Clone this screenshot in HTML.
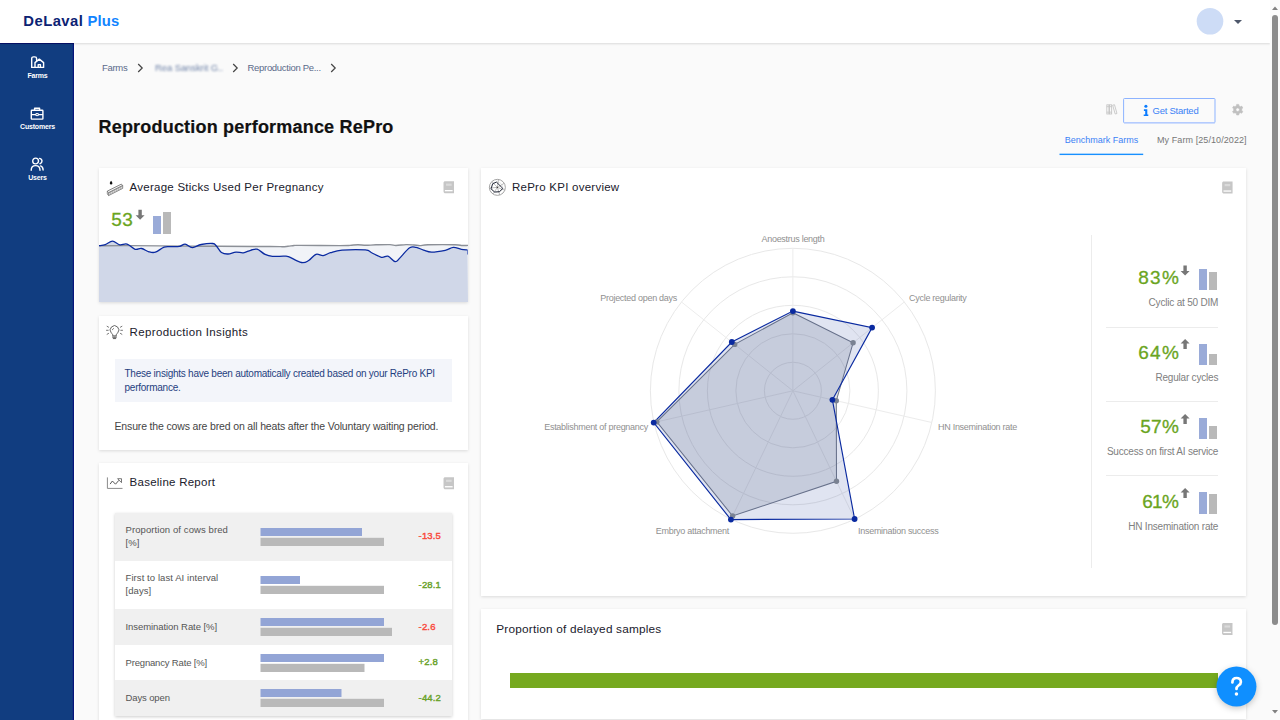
<!DOCTYPE html>
<html><head><meta charset="utf-8"><title>DeLaval Plus</title>
<style>
*{box-sizing:border-box;margin:0;padding:0}
html,body{width:1280px;height:720px;overflow:hidden;background:#fafafa;font-family:"Liberation Sans",sans-serif;color:#222}
#hdr{position:absolute;left:0;top:0;width:1270px;height:43px;background:#fff;box-shadow:0 1px 2px rgba(0,0,0,.13);z-index:5}
.logo{position:absolute;left:23.300px;top:12.400px;font-weight:bold;font-size:14.800px;line-height:18px;color:#0c2273;white-space:nowrap;letter-spacing:.2px}
#caret{position:absolute;left:1234px;top:20px;width:0;height:0;border-left:4px solid transparent;border-right:4px solid transparent;border-top:4px solid #4f586b}
#side{position:absolute;left:0;top:43px;width:74.400px;height:677px;background:#113d80;box-shadow:inset 0 1px 0 #06126e,inset -1.200px 0 0 #06157a,1.500px 0 0 #fdfdfd;z-index:4}
.nav{position:absolute;left:.5px;margin-top:0;width:74px;text-align:center;color:#fff;font-weight:bold;font-size:7px;line-height:8px;letter-spacing:-.2px}
.card{position:absolute;background:#fff;box-shadow:0 1px 3px rgba(0,0,0,.13)}
.ct{position:absolute;font-size:11.500px;line-height:14px;letter-spacing:.25px;color:#20202c;white-space:nowrap}
#sb{position:absolute;left:1270px;top:0;width:10px;height:720px;background:#fafafa;z-index:9}
#sb .th{position:absolute;left:2px;top:15px;width:6px;height:610px;border-radius:3px;background:#8b8b8b}
.t{position:absolute;white-space:nowrap}
svg{position:absolute;overflow:visible}
.bc{position:absolute;top:61.500px;font-size:9.500px;line-height:12px;color:#5a6a8a;white-space:nowrap;letter-spacing:-.3px}
.big{position:absolute;font-size:19px;line-height:22px;color:#6aa51e;white-space:nowrap;letter-spacing:.6px;-webkit-text-stroke:.3px #6aa51e}
.kl{position:absolute;font-size:10px;line-height:12px;color:#808080;white-space:nowrap;text-align:right;right:-.2px;letter-spacing:-.2px}
.rl{position:absolute;font-size:9px;line-height:11px;color:#909090;white-space:nowrap;letter-spacing:-.28px}
.row{position:absolute;left:16px;width:337px}
.rt{position:absolute;left:26.500px;font-size:9.500px;line-height:13.300px;color:#555;white-space:nowrap}
.rv{position:absolute;left:319.600px;font-size:9.500px;line-height:12px;font-weight:normal;white-space:nowrap;-webkit-text-stroke:.4px currentColor;letter-spacing:.15px}
.bb{position:absolute;left:146px;height:8px;background:#93a5d6}
.bg{position:absolute;left:146px;height:8px;background:#b9b9b9}
</style></head><body>
<div id="hdr"><div class="logo" style="letter-spacing:.47px">DeLaval</div><div class="logo" style="left:87.400px;color:#1284ff">Plus</div><svg style="left:1190px;top:0" width="40" height="43"><circle cx="20" cy="21.250" r="13.300" fill="#cddcf6"/></svg><div id="caret"></div></div>
<div id="side">
<svg style="left:30px;top:13px" width="15" height="13" viewBox="0 0 15 13" fill="none" stroke="#fff" stroke-width="1.4" stroke-linejoin="round" stroke-linecap="round"><path d="M1.7 11.4V2.6c0-1 .8-1.7 1.8-1.7h1.3c1 0 1.8.7 1.8 1.7v2"/><path d="M5 11.4V6.6l4.3-3.5 4.3 3.5v4.8H1.7"/><path d="M8.2 11.2V8.6h2.2v2.6"/></svg>
<div class="nav" style="top:29px">Farms</div>
<svg style="left:30px;top:64px" width="14" height="13" viewBox="0 0 14 13" fill="none" stroke="#fff" stroke-width="1.4" stroke-linejoin="round"><rect x="1.3" y="3.3" width="11.6" height="8.8" rx=".6"/><path d="M4.6 3.2V1.2h5v2"/><path d="M1.3 7.6h4.6M8.3 7.6h4.6"/><path d="M5.9 6.6h2.4v2h-2.4z" stroke-width="1"/></svg>
<div class="nav" style="top:80px">Customers</div>
<svg style="left:30px;top:114px" width="14" height="14" viewBox="0 0 14 14" fill="none" stroke="#fff" stroke-width="1.4" stroke-linecap="round"><circle cx="5.6" cy="4" r="2.9"/><path d="M1.2 13.2c0-2.9 1.9-4.6 4.4-4.6s4.4 1.7 4.4 4.6"/><path d="M9.6 1.4c1.5.3 2.4 1.3 2.4 2.7 0 1.300-.8 2.300-2 2.600"/><path d="M10.600 8.900c1.500.5 2.500 1.900 2.500 4.200"/></svg>
<div class="nav" style="top:131px">Users</div>
</div>
<div id="sb"><svg style="left:2px;top:6px" width="6" height="4"><path d="M0 4L3 0.500L6 4z" fill="#808080"/></svg><div class="th"></div><svg style="left:2px;top:710px" width="6" height="4"><path d="M0 0L3 3.500L6 0z" fill="#808080"/></svg></div>
<div class="bc" style="left:102px">Farms</div><svg style="left:137px;top:63px" width="7" height="10" viewBox="0 0 7 10" fill="none" stroke="#444" stroke-width="1.2"><path d="M1.2 1l4 4-4 4"/></svg>
<div class="bc" style="left:155px;color:#6f83a8;filter:blur(1.3px);letter-spacing:-.1px">Rea Sanskrit G..</div><svg style="left:232px;top:63px" width="7" height="10" viewBox="0 0 7 10" fill="none" stroke="#444" stroke-width="1.2"><path d="M1.2 1l4 4-4 4"/></svg>
<div class="bc" style="left:247.500px">Reproduction Pe...</div><svg style="left:329.5px;top:63px" width="7" height="10" viewBox="0 0 7 10" fill="none" stroke="#444" stroke-width="1.2"><path d="M1.2 1l4 4-4 4"/></svg>
<div class="t" style="left:98.500px;top:116px;font-size:18px;line-height:22px;font-weight:bold;color:#111;letter-spacing:.2px;-webkit-text-stroke:.2px #111">Reproduction performance RePro</div>
<svg style="left:1105.500px;top:103.600px" width="11.900" height="11" viewBox="0 0 13 12" fill="none" stroke="#c2c2c2" stroke-width=".9"><rect x=".9" y=".9" width="2.300" height="10"/><rect x="3.900" y=".9" width="2.300" height="10"/><path d="M.9 2.900h2.300M.9 8.900h2.300M3.900 2.900h2.300M3.900 8.900h2.300"/><path d="M7.300 1.300l2-.5 2.700 9.600-2 .5z"/></svg>
<svg style="left:1123px;top:98px" width="94" height="27"><rect x=".6" y=".5" width="91.400" height="24.300" rx=".8" fill="none" stroke="#8db3ff" stroke-width="1"/><path d="M1 25.200h91" stroke="#c5d8ff" stroke-width=".8"/></svg>
<svg style="left:1143px;top:104px" width="6" height="13" viewBox="0 0 6 13" fill="#0a7cff"><circle cx="2.900" cy="2.250" r="1.550"/><path d="M.9 5.200h3.400v5.200h1v1.700H.7v-1.700h1.500V6.900H.9z"/></svg>
<div class="t" style="left:1152.500px;top:105px;font-size:9.500px;line-height:12px;color:#3b82f6;letter-spacing:-.24px">Get Started</div>
<svg style="left:1231.700px;top:103.500px" width="11.400" height="11.400" viewBox="0 0 12 12"><path fill-rule="evenodd" d="M4.65 1.92L4.87 0.41L7.13 0.41L7.35 1.92L8.86 2.79L10.27 2.23L11.40 4.19L10.21 5.13L10.21 6.87L11.40 7.81L10.27 9.77L8.86 9.21L7.35 10.08L7.13 11.59L4.87 11.59L4.65 10.08L3.14 9.21L1.73 9.77L0.60 7.81L1.79 6.87L1.79 5.13L0.60 4.19L1.73 2.23L3.14 2.79ZM7.90 6.00A1.9 1.9 0 1 0 4.10 6.00A1.9 1.9 0 1 0 7.90 6.00Z" fill="#c0c0c0" stroke="#c0c0c0" stroke-width=".6" stroke-linejoin="round"/></svg>
<div class="t" style="left:1064.800px;top:133.500px;font-size:9px;line-height:12px;color:#3b82f6;letter-spacing:0px">Benchmark Farms</div>
<svg style="left:1059px;top:153px" width="86" height="3"><rect x=".5" y=".65" width="83.700" height="1.400" fill="#1890ff"/></svg>
<div class="t" style="left:1157px;top:133.500px;font-size:9px;line-height:12px;color:#777;letter-spacing:.08px">My Farm [25/10/2022]</div>
<div class="card" style="left:99px;top:168px;width:369px;height:134px;overflow:hidden">
<svg style="left:0;top:0" width="30" height="30" viewBox="0 0 30 30" fill="none"><path d="M12.100 12.800c.9 1.200 1.300 1.900 1.300 2.500a1.300 1.300 0 0 1-2.600 0c0-.6.400-1.300 1.300-2.500z" fill="#111"/><path d="M8.300 23.100L22.400 16.100l1.300 1.500L9.600 24.800z" fill="#f4f4f4" stroke="#555" stroke-width=".7" stroke-linejoin="round"/><path d="M9.600 24.800L23.700 17.600v2.800L9.600 27.600z" fill="#ddd" stroke="#666" stroke-width=".7" stroke-linejoin="round"/><path d="M8.300 23.100v2.900l1.300 1.600" stroke="#666" stroke-width=".7"/><path d="M11.600 23.900v2.600M13.600 22.900v2.600M15.600 21.900v2.600M17.600 20.900v2.600M19.600 19.900v2.600M21.600 18.900v2.600" stroke="#999" stroke-width=".6"/></svg>
<div class="ct" style="left:30.600px;top:11.500px">Average Sticks Used Per Pregnancy</div>
<svg style="left:344px;top:12px" width="14" height="15" viewBox="0 0 14 15"><g transform="translate(0.00 0.70) scale(1.045 1)"><path d="M2 .5h8.500v12H2.300C1.300 12.500.5 11.700.5 10.700V2C.5 1.200 1.200.5 2 .5z" fill="#c6c6c6"/><rect x="2.900" y="2.900" width="5.400" height="2.200" fill="#dadada"/><rect x="1.800" y="9.300" width="7.400" height="1.300" fill="#fff"/></g></svg>
<div class="big" style="left:12.200px;top:41.300px">53</div>
<svg style="left:36px;top:41px" width="11" height="12" viewBox="0 0 11 12"><path transform="translate(0.60 0.80)" d="M4.500 10L9 5.400H6.200V0H2.800V5.400H0z" fill="#777"/></svg>
<div style="position:absolute;left:54px;top:48px;width:8px;height:18px;background:#9aabd8"></div>
<div style="position:absolute;left:64px;top:44px;width:8px;height:22px;background:#b9b9b9"></div>
<svg style="left:0;top:0" width="369" height="134" viewBox="0 0 369 134">
<path d="M0.0 77.8C5.6 77.8 12.8 77.5 31.0 77.6C49.2 77.7 75.8 78.0 101.0 78.2C126.2 78.4 156.2 78.4 171.0 78.5C185.8 78.6 179.8 78.7 183.0 78.7C186.2 78.7 186.8 78.5 189.0 78.3C191.2 78.1 192.8 77.7 195.0 77.5C197.2 77.3 192.7 77.4 201.0 77.4C209.3 77.4 232.0 77.6 241.0 77.6C250.0 77.6 247.8 77.6 251.0 77.4C254.2 77.2 256.1 76.7 259.0 76.7C261.9 76.7 263.8 77.3 267.0 77.3C270.2 77.3 272.7 76.9 277.0 76.8C281.3 76.7 287.4 76.5 291.0 76.6C294.6 76.7 294.1 77.5 297.0 77.5C299.9 77.5 303.8 76.7 307.0 76.6C310.2 76.5 312.5 76.8 315.0 77.0C317.5 77.2 318.5 77.6 321.0 77.6C323.5 77.6 322.7 77.0 329.0 76.8C335.3 76.6 349.9 76.6 356.0 76.7C362.1 76.8 360.7 77.4 363.0 77.5C365.3 77.6 367.9 77.4 369.0 77.4L369 134L0 134Z" fill="#f1f3f7"/>
<path d="M0.0 77.7C1.1 77.5 3.9 77.4 6.3 76.6C8.7 75.8 10.9 73.2 13.5 73.2C16.1 73.2 18.2 76.3 20.8 76.8C23.4 77.3 25.3 75.3 28.1 76.1C30.9 76.9 33.5 80.5 36.1 81.3C38.7 82.1 40.1 80.0 42.6 80.5C45.1 81.0 47.4 83.1 49.9 83.8C52.4 84.5 53.7 85.0 56.4 84.2C59.1 83.4 62.3 80.1 65.1 79.1C67.9 78.1 68.9 78.7 71.7 78.6C74.5 78.5 77.8 78.8 80.4 78.3C83.0 77.9 83.9 75.9 86.2 76.1C88.5 76.3 90.5 79.5 93.4 79.6C96.3 79.7 98.5 77.2 102.2 76.5C105.9 75.8 111.1 75.2 113.8 75.5C116.5 75.8 115.8 76.4 117.4 78.0C119.0 79.6 120.4 83.1 122.5 84.5C124.6 85.9 126.4 86.1 129.0 86.0C131.6 85.9 134.2 84.3 137.0 84.1C139.8 83.9 141.7 85.1 144.3 84.8C146.9 84.5 149.1 82.9 151.6 82.3C154.1 81.7 155.5 80.5 158.1 81.2C160.7 81.9 163.3 85.1 166.1 86.4C168.9 87.7 170.0 88.0 173.4 88.3C176.8 88.6 182.1 88.1 185.0 88.2C187.9 88.3 186.3 87.5 189.4 88.6C192.5 89.7 198.7 93.8 202.4 94.5C206.1 95.2 207.1 94.0 209.7 92.5C212.3 91.0 214.4 87.2 217.0 86.3C219.6 85.4 221.6 87.9 224.2 87.6C226.8 87.3 228.1 85.7 231.5 84.7C234.9 83.7 236.8 82.6 243.1 82.1C249.4 81.6 261.2 81.5 266.4 81.9C271.6 82.3 269.3 83.2 272.2 84.5C275.1 85.8 279.4 88.6 282.4 89.3C285.4 90.0 286.4 87.4 288.9 88.2C291.4 89.0 294.0 93.4 296.2 93.7C298.4 94.0 298.6 92.1 301.2 89.6C303.8 87.1 307.8 81.5 310.7 79.7C313.6 77.9 314.7 79.0 317.2 79.4C319.7 79.8 321.7 81.3 324.5 82.1C327.3 82.9 328.6 84.1 332.5 84.1C336.4 84.1 342.4 83.1 346.3 82.3C350.2 81.5 351.4 79.6 354.3 79.4C357.2 79.2 359.8 80.9 362.3 81.3C364.8 81.8 367.3 81.8 368.4 81.9L369 134L0 134Z" fill="#d0d7e8"/>
<path d="M0.0 77.8C5.6 77.8 12.8 77.5 31.0 77.6C49.2 77.7 75.8 78.0 101.0 78.2C126.2 78.4 156.2 78.4 171.0 78.5C185.8 78.6 179.8 78.7 183.0 78.7C186.2 78.7 186.8 78.5 189.0 78.3C191.2 78.1 192.8 77.7 195.0 77.5C197.2 77.3 192.7 77.4 201.0 77.4C209.3 77.4 232.0 77.6 241.0 77.6C250.0 77.6 247.8 77.6 251.0 77.4C254.2 77.2 256.1 76.7 259.0 76.7C261.9 76.7 263.8 77.3 267.0 77.3C270.2 77.3 272.7 76.9 277.0 76.8C281.3 76.7 287.4 76.5 291.0 76.6C294.6 76.7 294.1 77.5 297.0 77.5C299.9 77.5 303.8 76.7 307.0 76.6C310.2 76.5 312.5 76.8 315.0 77.0C317.5 77.2 318.5 77.6 321.0 77.6C323.5 77.6 322.7 77.0 329.0 76.8C335.3 76.6 349.9 76.6 356.0 76.7C362.1 76.8 360.7 77.4 363.0 77.5C365.3 77.6 367.9 77.4 369.0 77.4" fill="none" stroke="#8c9097" stroke-width="1.4"/>
<path d="M0.0 77.7C1.1 77.5 3.9 77.4 6.3 76.6C8.7 75.8 10.9 73.2 13.5 73.2C16.1 73.2 18.2 76.3 20.8 76.8C23.4 77.3 25.3 75.3 28.1 76.1C30.9 76.9 33.5 80.5 36.1 81.3C38.7 82.1 40.1 80.0 42.6 80.5C45.1 81.0 47.4 83.1 49.9 83.8C52.4 84.5 53.7 85.0 56.4 84.2C59.1 83.4 62.3 80.1 65.1 79.1C67.9 78.1 68.9 78.7 71.7 78.6C74.5 78.5 77.8 78.8 80.4 78.3C83.0 77.9 83.9 75.9 86.2 76.1C88.5 76.3 90.5 79.5 93.4 79.6C96.3 79.7 98.5 77.2 102.2 76.5C105.9 75.8 111.1 75.2 113.8 75.5C116.5 75.8 115.8 76.4 117.4 78.0C119.0 79.6 120.4 83.1 122.5 84.5C124.6 85.9 126.4 86.1 129.0 86.0C131.6 85.9 134.2 84.3 137.0 84.1C139.8 83.9 141.7 85.1 144.3 84.8C146.9 84.5 149.1 82.9 151.6 82.3C154.1 81.7 155.5 80.5 158.1 81.2C160.7 81.9 163.3 85.1 166.1 86.4C168.9 87.7 170.0 88.0 173.4 88.3C176.8 88.6 182.1 88.1 185.0 88.2C187.9 88.3 186.3 87.5 189.4 88.6C192.5 89.7 198.7 93.8 202.4 94.5C206.1 95.2 207.1 94.0 209.7 92.5C212.3 91.0 214.4 87.2 217.0 86.3C219.6 85.4 221.6 87.9 224.2 87.6C226.8 87.3 228.1 85.7 231.5 84.7C234.9 83.7 236.8 82.6 243.1 82.1C249.4 81.6 261.2 81.5 266.4 81.9C271.6 82.3 269.3 83.2 272.2 84.5C275.1 85.8 279.4 88.6 282.4 89.3C285.4 90.0 286.4 87.4 288.9 88.2C291.4 89.0 294.0 93.4 296.2 93.7C298.4 94.0 298.6 92.1 301.2 89.6C303.8 87.1 307.8 81.5 310.7 79.7C313.6 77.9 314.7 79.0 317.2 79.4C319.7 79.8 321.7 81.3 324.5 82.1C327.3 82.9 328.6 84.1 332.5 84.1C336.4 84.1 342.4 83.1 346.3 82.3C350.2 81.5 351.4 79.6 354.3 79.4C357.2 79.2 359.8 80.9 362.3 81.3C364.8 81.8 367.3 81.8 368.4 81.9" fill="none" stroke="#0a2aa0" stroke-width="1.3" stroke-linejoin="round"/><path d="M368.600 81.900V86.500" stroke="#3a55b5" stroke-width=".8"/>
</svg>
</div>
<div class="card" style="left:99px;top:316px;width:369px;height:134px">
<svg style="left:7.100px;top:8.900px" width="18" height="15" viewBox="0 0 18 15" fill="none" stroke="#555" stroke-width=".9" stroke-linecap="round"><path d="M6.900 10.300C6.900 9.300 5.900 8.700 5.300 7.900A4.300 4.300 0 1 1 11.700 7.900C11.100 8.700 10.100 9.300 10.100 10.300"/><path d="M6.900 10.300V13h3.200V10.300M8 10.500V13M9 10.500V13M7.300 13.600h2.400" stroke-width=".8"/><path d="M6.300 4.800l1.300-1.300" stroke-width=".8"/><path d="M.5 5.300h1.700M14.800 5.300h1.700M1.100 1.300l1.500.9M15.900 1.300l-1.500.9M1.100 9.300l1.500-.9M15.900 9.300l-1.500-.9" stroke="#666" stroke-width=".9"/></svg>
<div class="ct" style="left:30.600px;top:9px;letter-spacing:.35px">Reproduction Insights</div>
<div style="position:absolute;left:15.500px;top:43px;width:337.500px;height:42.500px;background:#f3f5fa"></div>
<div class="t" style="left:25.500px;top:50.500px;font-size:10px;line-height:14.300px;color:#1f3f80;letter-spacing:-.243px">These insights have been automatically created based on your RePro KPI<br>performance.</div>
<div class="t" style="left:15.500px;top:103px;font-size:10.500px;line-height:14px;color:#444;letter-spacing:-.154px">Ensure the cows are bred on all heats after the Voluntary waiting period.</div>
</div>
<div class="card" style="left:99px;top:463px;width:369px;height:270px">
<svg style="left:7px;top:11.500px" width="18" height="15" viewBox="0 0 18 15" fill="none" stroke="#777" stroke-width=".9"><path d="M1.400 2.400v11h15.100" stroke="#8a8a8a" stroke-width="1"/><path d="M4.100 9.100l2.300-3.100 3.100 3.200 3.400-3.900" stroke="#444"/><path d="M11.600 3.700h3.900v3.900z" stroke="#555" stroke-width=".8" stroke-linejoin="round"/></svg>
<div class="ct" style="left:30.600px;top:12px">Baseline Report</div>
<svg style="left:344px;top:13px" width="14" height="15" viewBox="0 0 14 15"><g transform="translate(0.00 0.80) scale(1.045 1)"><path d="M2 .5h8.500v12H2.300C1.300 12.500.5 11.700.5 10.700V2C.5 1.200 1.200.5 2 .5z" fill="#c6c6c6"/><rect x="2.900" y="2.900" width="5.400" height="2.200" fill="#dadada"/><rect x="1.800" y="9.300" width="7.400" height="1.300" fill="#fff"/></g></svg>
<div style="position:absolute;left:16px;top:49.800px;width:337px;height:203px;box-shadow:0 1px 3px rgba(0,0,0,.2);background:#fff"></div>
<div class="row" style="top:49.8px;height:48px;background:#f0f0f0"></div>
<div class="rt" style="top:60.2px;letter-spacing:0.09px">Proportion of cows bred<br>[%]</div>
<svg style="left:161px;top:64.5px" width="140" height="19"><rect x=".5" y="0" width="101.5" height="8" fill="#93a5d6"/><rect x=".5" y="9.800" width="123.5" height="8.200" fill="#b9b9b9"/></svg>
<div class="rv" style="top:66.5px;color:#f94a3d">-13.5</div>
<div class="row" style="top:97.8px;height:48px;background:#fff"></div>
<div class="rt" style="top:108.2px;letter-spacing:0.08px">First to last AI interval<br>[days]</div>
<svg style="left:161px;top:112.5px" width="140" height="19"><rect x=".5" y="0" width="39.5" height="8" fill="#93a5d6"/><rect x=".5" y="9.800" width="123.5" height="8.200" fill="#b9b9b9"/></svg>
<div class="rv" style="top:115.5px;color:#69a22a">-28.1</div>
<div class="row" style="top:145.8px;height:36px;background:#f0f0f0"></div>
<div class="rt" style="top:156.7px;letter-spacing:-0.07px">Insemination Rate [%]</div>
<svg style="left:161px;top:155.1px" width="140" height="19"><rect x=".5" y="0" width="123.5" height="8" fill="#93a5d6"/><rect x=".5" y="9.800" width="131.5" height="8.200" fill="#b9b9b9"/></svg>
<div class="rv" style="top:157.5px;color:#f94a3d">-2.6</div>
<div class="row" style="top:181.8px;height:35.6px;background:#fff"></div>
<div class="rt" style="top:192.5px;letter-spacing:-0.17px">Pregnancy Rate [%]</div>
<svg style="left:161px;top:190.9px" width="140" height="19"><rect x=".5" y="0" width="123.5" height="8" fill="#93a5d6"/><rect x=".5" y="9.800" width="104" height="8.200" fill="#b9b9b9"/></svg>
<div class="rv" style="top:193.3px;color:#69a22a">+2.8</div>
<div class="row" style="top:217.4px;height:35.3px;background:#f0f0f0"></div>
<div class="rt" style="top:228.0px;letter-spacing:-0.12px">Days open</div>
<svg style="left:161px;top:225.8px" width="140" height="19"><rect x=".5" y="0" width="81" height="8" fill="#93a5d6"/><rect x=".5" y="9.800" width="123.5" height="8.200" fill="#b9b9b9"/></svg>
<div class="rv" style="top:228.8px;color:#69a22a">-44.2</div>
</div>
<div class="card" style="left:481px;top:168px;width:765px;height:428px">
<svg style="left:0;top:0" width="30" height="32" viewBox="0 0 30 32" fill="none"><circle cx="16.36" cy="19.36" r="8" stroke="#9a9a9a" stroke-width=".9"/><circle cx="16.36" cy="19.36" r="5.300" stroke="#ccc" stroke-width=".5"/><path d="M16.36 19.36L17.47 11.44M16.36 19.36L23.25 15.29M16.36 19.36L23.84 22.21M16.36 19.36L18.79 26.98M16.36 19.36L11.92 26.01M16.36 19.36L8.39 20.04M16.36 19.36L10.86 13.55" stroke="#909090" stroke-width=".6"/><path d="M15.450 14.100L21.800 20.400L18.500 23.700L13.500 24L10 20.800L11.700 15.700z" stroke="#1a2030" stroke-width=".95" stroke-linejoin="round"/><circle cx="16.36" cy="19.36" r=".7" fill="#333"/></svg>
<div class="ct" style="left:31px;top:12px">RePro KPI overview</div>
<svg style="left:740px;top:13px" width="14" height="15" viewBox="0 0 14 15"><g transform="translate(0.60 0.10) scale(1.045 1)"><path d="M2 .5h8.500v12H2.300C1.300 12.500.5 11.700.5 10.700V2C.5 1.200 1.200.5 2 .5z" fill="#c6c6c6"/><rect x="2.900" y="2.900" width="5.400" height="2.200" fill="#dadada"/><rect x="1.800" y="9.300" width="7.400" height="1.300" fill="#fff"/></g></svg>
<svg style="left:0;top:0" width="765" height="428" viewBox="0 0 765 428">
<circle cx="311.9" cy="222.8" r="28.5" fill="none" stroke="#e8e8e8" stroke-width="1"/>
<circle cx="311.9" cy="222.8" r="57.0" fill="none" stroke="#e8e8e8" stroke-width="1"/>
<circle cx="311.9" cy="222.8" r="85.5" fill="none" stroke="#e8e8e8" stroke-width="1"/>
<circle cx="311.9" cy="222.8" r="114.0" fill="none" stroke="#e8e8e8" stroke-width="1"/>
<circle cx="311.9" cy="222.8" r="142.5" fill="none" stroke="#e8e8e8" stroke-width="1"/>
<path d="M311.9 222.8L311.9 80.3" stroke="#ececec" stroke-width="1"/>
<path d="M311.9 222.8L423.3 134.0" stroke="#ececec" stroke-width="1"/>
<path d="M311.9 222.8L450.8 254.5" stroke="#ececec" stroke-width="1"/>
<path d="M311.9 222.8L373.7 351.2" stroke="#ececec" stroke-width="1"/>
<path d="M311.9 222.8L250.1 351.2" stroke="#ececec" stroke-width="1"/>
<path d="M311.9 222.8L173.0 254.5" stroke="#ececec" stroke-width="1"/>
<path d="M311.9 222.8L200.5 134.0" stroke="#ececec" stroke-width="1"/>
<polygon points="311.9,144.8 372.1,174.8 355.3,232.7 355.5,313.3 251.6,348.0 175.8,253.9 253.7,176.4" fill="rgba(105,115,135,.2)" stroke="#717887" stroke-width="1.050"/>
<polygon points="311.9,143.1 391.1,159.6 351.4,231.8 373.6,351.0 249.9,351.6 172.7,254.6 250.8,174.0" fill="rgba(40,70,160,.145)" stroke="#0a2aa0" stroke-width="1.150"/>
<circle cx="311.9" cy="144.8" r="2.700" fill="#7a8292"/>
<circle cx="372.1" cy="174.8" r="2.700" fill="#7a8292"/>
<circle cx="355.3" cy="232.7" r="2.700" fill="#7a8292"/>
<circle cx="355.5" cy="313.3" r="2.700" fill="#7a8292"/>
<circle cx="251.6" cy="348.0" r="2.700" fill="#7a8292"/>
<circle cx="175.8" cy="253.9" r="2.700" fill="#7a8292"/>
<circle cx="253.7" cy="176.4" r="2.700" fill="#7a8292"/>
<circle cx="311.9" cy="143.1" r="2.900" fill="#0a2aa0"/>
<circle cx="391.1" cy="159.6" r="2.900" fill="#0a2aa0"/>
<circle cx="351.4" cy="231.8" r="2.900" fill="#0a2aa0"/>
<circle cx="373.6" cy="351.0" r="2.900" fill="#0a2aa0"/>
<circle cx="249.9" cy="351.6" r="2.900" fill="#0a2aa0"/>
<circle cx="172.7" cy="254.6" r="2.900" fill="#0a2aa0"/>
<circle cx="250.8" cy="174.0" r="2.900" fill="#0a2aa0"/>
</svg>
<div class="rl" style="left:212px;width:200px;text-align:center;top:65.5px">Anoestrus length</div>
<div class="rl" style="left:428px;top:124.5px">Cycle regularity</div>
<div class="rl" style="left:457px;top:253.5px">HN Insemination rate</div>
<div class="rl" style="left:377px;top:357.5px">Insemination success</div>
<div class="rl" style="right:517px;top:357.5px">Embryo attachment</div>
<div class="rl" style="right:598px;top:253.5px">Establishment of pregnancy</div>
<div class="rl" style="right:569px;top:124.5px">Projected open days</div>
<div style="position:absolute;left:610px;top:67px;width:1px;height:332.500px;background:#ececec"></div>
<div style="position:absolute;left:625px;top:84.5px;width:112px;height:75px">
<div class="big" style="right:37.90px;top:14.800px;letter-spacing:1.3px">83%</div>
<svg style="left:74px;top:12px" width="11" height="12" viewBox="0 0 11 12"><path transform="translate(0.60 0.50)" d="M4.500 10L9 5.400H6.200V0H2.800V5.400H0z" fill="#777"/></svg>
<div style="position:absolute;left:93px;top:16.5px;width:8px;height:21px;background:#9aabd8"></div>
<div style="position:absolute;left:103px;top:19.0px;width:8px;height:18.5px;background:#b9b9b9"></div>
<div class="kl" style="top:44.900px">Cyclic at 50 DIM</div>
</div>
<div style="position:absolute;left:625px;top:159.0px;width:112px;height:75px">
<div class="big" style="right:37.90px;top:14.800px;letter-spacing:1.3px">64%</div>
<svg style="left:74px;top:12px" width="11" height="12" viewBox="0 0 11 12"><path transform="translate(0.60 0.00)" d="M4.500 0L9 4.600H6.200V10H2.800V4.600H0z" fill="#777"/></svg>
<div style="position:absolute;left:93px;top:16.5px;width:8px;height:21px;background:#9aabd8"></div>
<div style="position:absolute;left:103px;top:27.0px;width:8px;height:10.5px;background:#b9b9b9"></div>
<div class="kl" style="top:44.900px">Regular cycles</div>
</div>
<div style="position:absolute;left:625px;top:233.5px;width:112px;height:75px">
<div class="big" style="right:38.95px;top:14.800px;letter-spacing:0.25px">57%</div>
<svg style="left:74px;top:12px" width="11" height="12" viewBox="0 0 11 12"><path transform="translate(0.60 0.00)" d="M4.500 0L9 4.600H6.200V10H2.800V4.600H0z" fill="#777"/></svg>
<div style="position:absolute;left:93px;top:16.0px;width:8px;height:21.5px;background:#9aabd8"></div>
<div style="position:absolute;left:103px;top:24.5px;width:8px;height:13px;background:#b9b9b9"></div>
<div class="kl" style="top:44.900px">Success on first AI service</div>
</div>
<div style="position:absolute;left:625px;top:308.0px;width:112px;height:75px">
<div class="big" style="right:39.90px;top:14.800px;letter-spacing:-0.7px">61%</div>
<svg style="left:74px;top:12px" width="11" height="12" viewBox="0 0 11 12"><path transform="translate(0.60 0.00)" d="M4.500 0L9 4.600H6.200V10H2.800V4.600H0z" fill="#777"/></svg>
<div style="position:absolute;left:93px;top:16.0px;width:8px;height:21.5px;background:#9aabd8"></div>
<div style="position:absolute;left:103px;top:17.5px;width:8px;height:20px;background:#b9b9b9"></div>
<div class="kl" style="top:44.900px">HN Insemination rate</div>
</div>
<div style="position:absolute;left:625px;top:159px;width:112px;height:1px;background:#ececec"></div>
<div style="position:absolute;left:625px;top:233px;width:112px;height:1px;background:#ececec"></div>
<div style="position:absolute;left:625px;top:307px;width:112px;height:1px;background:#ececec"></div>
</div>
<div class="card" style="left:481px;top:609px;width:765px;height:109.500px">
<div class="ct" style="left:15.300px;top:13px;font-size:11.800px;letter-spacing:.2px">Proportion of delayed samples</div>
<svg style="left:740px;top:13px" width="14" height="15" viewBox="0 0 14 15"><g transform="translate(0.50 0.50) scale(1.045 1)"><path d="M2 .5h8.500v12H2.300C1.300 12.500.5 11.700.5 10.700V2C.5 1.200 1.200.5 2 .5z" fill="#c6c6c6"/><rect x="2.900" y="2.900" width="5.400" height="2.200" fill="#dadada"/><rect x="1.800" y="9.300" width="7.400" height="1.300" fill="#fff"/></g></svg>
<div style="position:absolute;left:28.500px;top:64px;width:708.400px;height:15.200px;background:#76a91f"></div>
</div>
<svg style="left:1216px;top:666px;z-index:9;filter:drop-shadow(0 2px 3px rgba(0,0,0,.22))" width="42" height="42" viewBox="0 0 42 42" fill="none"><circle cx="20.450" cy="20.550" r="20" fill="#0f8fff"/><g transform="translate(.5 .3)"><path d="M15.900 16.100C15.900 13.400 17.600 11.700 20.100 11.700C22.600 11.700 24.400 13.300 24.400 15.600C24.400 17.400 23.300 18.300 22 19.200C20.700 20.100 20 20.900 20 22.600" stroke="#fff" stroke-width="2.700" stroke-linecap="round"/><circle cx="19.950" cy="27.600" r="1.750" fill="#fff"/></g></svg>
</body></html>
